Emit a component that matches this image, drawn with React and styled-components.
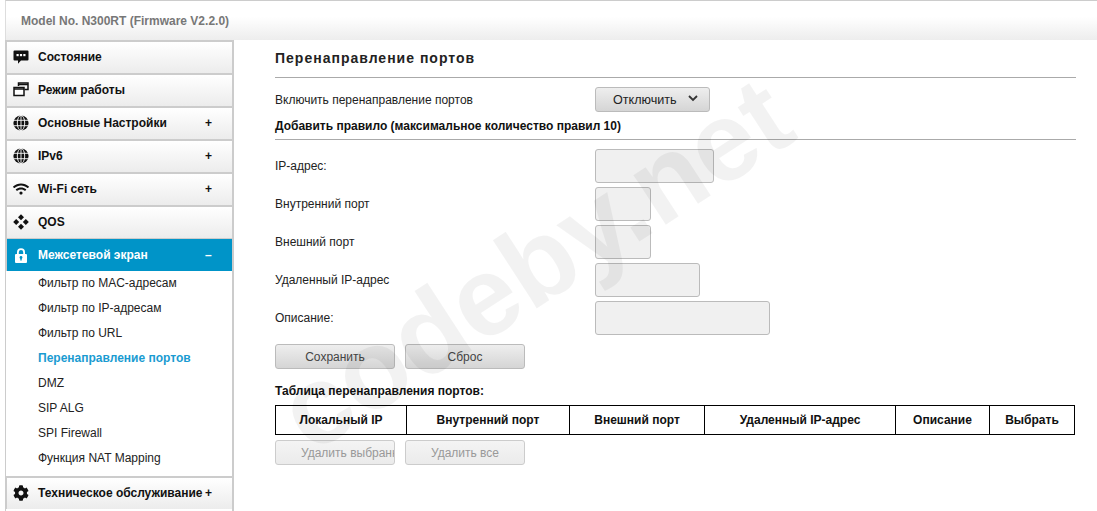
import React from 'react'
import styled, { createGlobalStyle } from 'styled-components'
import { FaCog, FaWifi } from 'react-icons/fa'

const GlobalStyle = createGlobalStyle`
  html, body { margin: 0; padding: 0; background: #fff; }
  body { font-family: "Liberation Sans", Arial, sans-serif; font-size: 12px; color: #1a1a1a; overflow: hidden; }
`

const Page = styled.div`
  position: relative;
  width: 1097px;
  height: 511px;
  overflow: hidden;
`

const Header = styled.header`
  box-sizing: border-box;
  height: 40px;
  margin-left: 5px;
  padding: 12px 0 0 15px;
  border-top: 1px solid #ccc;
  border-left: 1px solid #ddd;
  background: linear-gradient(#fff 40%, #ededed);
  color: #777;
  font-size: 12px;
  font-weight: bold;
  line-height: 16px;
`

const Layout = styled.div`
  display: flex;
`

const Sidebar = styled.aside`
  box-sizing: border-box;
  width: 229px;
  height: 471px;
  margin-left: 5px;
  border-left: 1px solid #ccc;
  border-right: 2px solid #ccc;
`

const MenuRow = styled.div`
  box-sizing: border-box;
  display: flex;
  align-items: center;
  height: 33px;
  padding: 0 0 ${p => (p.$active ? 0 : 2)}px 6px;
  border-top: ${p => (p.$active ? '1px' : '2px')} solid #ccc;
  border-left: 1px solid #ccc;
  background: ${p => (p.$active ? '#0094c8' : 'linear-gradient(#fff, #ececec)')};
  background-clip: padding-box;
  color: ${p => (p.$active ? '#fff' : '#111')};
  font-weight: bold;
`

const IconBox = styled.span`
  display: flex;
  justify-content: center;
  align-items: center;
  width: 16px;
  height: 17px;
  margin-right: 9px;
  font-size: 16px;
`

const MenuLabel = styled.span`
  flex: 1;
  white-space: nowrap;
`

const Sign = styled.span`
  flex: none;
  width: 27px;
  font-size: 12px;
`

const SubMenu = styled.div`
  padding: 0 0 5px 32px;
`

const SubItem = styled.div`
  height: 25px;
  line-height: 25px;
  color: ${p => (p.$current ? '#1a9bd1' : '#222')};
  font-weight: ${p => (p.$current ? 'bold' : 'normal')};
`

const Main = styled.main`
  width: 801px;
  margin-left: 41px;
`

const Title = styled.h1`
  box-sizing: border-box;
  height: 38px;
  margin: 0;
  padding-top: 10px;
  border-bottom: 1px solid #aaa;
  color: #222;
  font-size: 14px;
  font-weight: bold;
  line-height: 16px;
  letter-spacing: 1px;
`

const FieldRow = styled.div`
  box-sizing: border-box;
  display: flex;
  align-items: center;
  height: ${p => p.$h || 38}px;
  padding-top: ${p => p.$pt || 0}px;
`

const Label = styled.label`
  width: 320px;
  color: #222;
  line-height: 14px;
`

const SelectButton = styled.button`
  box-sizing: border-box;
  display: flex;
  align-items: center;
  width: 115px;
  height: 25px;
  padding: 0 0 0 17px;
  border: 1px solid #bbb;
  border-radius: 3px;
  background: linear-gradient(#eee, #d5d5d5);
  color: #222;
  font: 12.6px "Liberation Sans", Arial, sans-serif;
`

const Chevron = styled.svg`
  width: 10px;
  height: 7px;
  margin-left: 11px;
  margin-top: -3px;
`

const SubHeading = styled.div`
  box-sizing: border-box;
  height: ${p => p.$h}px;
  padding-top: ${p => p.$pt || 0}px;
  border-bottom: ${p => (p.$line ? '1px solid #aaa' : '0')};
  color: #111;
  font-weight: bold;
  line-height: 14px;
`

const Fields = styled.div`
  padding-top: 7px;
`

const Input = styled.input`
  box-sizing: border-box;
  display: block;
  width: ${p => p.$w}px;
  height: 34px;
  padding: 0;
  border: 1px solid #bbb;
  border-radius: 3px;
  background: #f0f0f0;
`

const ButtonRow = styled.div`
  display: flex;
  gap: 10px;
  margin-top: ${p => p.$top}px;
`

const Btn = styled.button`
  box-sizing: border-box;
  width: 120px;
  height: 25px;
  overflow: hidden;
  padding: 0 0 0 ${p => (p.$clip ? 25 : 0)}px;
  border: 1px solid ${p => (p.$off ? '#ccc' : '#bbb')};
  border-radius: 3px;
  background: ${p => (p.$off ? 'linear-gradient(#f4f4f4, #ebebeb)' : 'linear-gradient(#eee, #d5d5d5)')};
  color: ${p => (p.$off ? '#999' : '#444')};
  font: 12px "Liberation Sans", Arial, sans-serif;
  text-align: ${p => (p.$clip ? 'left' : 'center')};
  white-space: nowrap;
`

const Table = styled.table`
  box-sizing: border-box;
  width: 799px;
  height: 30px;
  margin: 0;
  border-collapse: collapse;
  table-layout: fixed;
`

const Th = styled.th`
  box-sizing: border-box;
  padding: 0;
  border: 1px solid #000;
  color: #111;
  font-size: 12px;
  font-weight: bold;
`

const Watermark = styled.div`
  position: absolute;
  left: 321px;
  top: 358px;
  color: rgba(0, 0, 0, 0.05);
  font-size: 112px;
  font-weight: bold;
  line-height: 112px;
  white-space: nowrap;
  transform: rotate(-33deg);
  transform-origin: 0 100%;
  pointer-events: none;
`

const ChatIcon = () => (
  <svg width="16" height="16" viewBox="0 0 16 16">
    <path d="M1.500 1.500h13a1 1 0 0 1 1 1v8a1 1 0 0 1-1 1H8l-3 3.200v-3.200H1.500a1 1 0 0 1-1-1v-8a1 1 0 0 1 1-1z" fill="#111" />
    <rect x="3.500" y="5" width="2.200" height="2.200" fill="#fff" />
    <rect x="6.900" y="5" width="2.200" height="2.200" fill="#fff" />
    <rect x="10.300" y="5" width="2.200" height="2.200" fill="#fff" />
  </svg>
)

const WindowsIcon = () => (
  <svg width="16" height="15" viewBox="0 0 16 15" fill="none" stroke="#111" strokeWidth="1.500">
    <path d="M5.500 4V1h9.500v6.500H11.500" />
    <rect x="1" y="5.500" width="10" height="8" fill="#fff" />
    <path d="M1 7h10M5.500 2.500h9.500" />
  </svg>
)

const GlobeIcon = () => (
  <svg width="16" height="16" viewBox="0 0 16 16">
    <circle cx="8" cy="8" r="7.600" fill="#111" />
    <g fill="none" stroke="#fff" strokeWidth="0.900">
      <path d="M0.500 5.300h15M0.500 10.700h15M8 0.400v15.200" />
      <ellipse cx="8" cy="8" rx="3.700" ry="7.600" />
    </g>
  </svg>
)

const QosIcon = () => (
  <svg width="16" height="16" viewBox="0 0 16 16" fill="#111">
    <path d="M8 0.200l3 3-3 3-3-3z" />
    <path d="M8 9.800l3 3-3 3-3-3z" />
    <path d="M3.200 5l3 3-3 3-3-3z" />
    <path d="M12.800 5l3 3-3 3-3-3z" />
  </svg>
)

const LockIcon = () => (
  <svg width="12" height="15" viewBox="0 0 12 15">
    <path d="M1 6h1V4.200a4 4 0 0 1 8 0V6h1a1 1 0 0 1 1 1v7a1 1 0 0 1-1 1H1a1 1 0 0 1-1-1V7a1 1 0 0 1 1-1zm2.800 0h4.400V4.200a2.200 2.200 0 0 0-4.400 0z" fill="#fff" fillRule="evenodd" />
    <circle cx="6" cy="9.500" r="1.400" fill="#0094c8" />
    <rect x="5.300" y="9.500" width="1.400" height="3" fill="#0094c8" />
  </svg>
)

const menuTop = [
  { label: 'Состояние', icon: <ChatIcon /> },
  { label: 'Режим работы', icon: <WindowsIcon /> },
  { label: 'Основные Настройки', icon: <GlobeIcon />, sign: '+' },
  { label: 'IPv6', icon: <GlobeIcon />, sign: '+' },
  { label: 'Wi-Fi сеть', icon: <FaWifi />, sign: '+' },
  { label: 'QOS', icon: <QosIcon /> },
]

const subItems = [
  'Фильтр по MAC-адресам',
  'Фильтр по IP-адресам',
  'Фильтр по URL',
  'Перенаправление портов',
  'DMZ',
  'SIP ALG',
  'SPI Firewall',
  'Функция NAT Mapping',
]

const fields = [
  { label: 'IP-адрес:', w: 119 },
  { label: 'Внутренний порт', w: 56 },
  { label: 'Внешний порт', w: 56 },
  { label: 'Удаленный IP-адрес', w: 105 },
  { label: 'Описание:', w: 175 },
]

const columns = [
  { title: 'Локальный IP', w: 131 },
  { title: 'Внутренний порт', w: 163 },
  { title: 'Внешний порт', w: 135 },
  { title: 'Удаленный IP-адрес', w: 191 },
  { title: 'Описание', w: 94 },
  { title: 'Выбрать', w: 85 },
]

export default function App() {
  return (
    <Page>
      <GlobalStyle />
      <Header>Model No. N300RT (Firmware V2.2.0)</Header>
      <Layout>
        <Sidebar>
          {menuTop.map(item => (
            <MenuRow key={item.label}>
              <IconBox>{item.icon}</IconBox>
              <MenuLabel>{item.label}</MenuLabel>
              {item.sign && <Sign>{item.sign}</Sign>}
            </MenuRow>
          ))}
          <MenuRow $active>
            <IconBox><LockIcon /></IconBox>
            <MenuLabel>Межсетевой экран</MenuLabel>
            <Sign>–</Sign>
          </MenuRow>
          <SubMenu>
            {subItems.map(name => (
              <SubItem key={name} $current={name === 'Перенаправление портов'}>{name}</SubItem>
            ))}
          </SubMenu>
          <MenuRow>
            <IconBox><FaCog /></IconBox>
            <MenuLabel>Техническое обслуживание</MenuLabel>
            <Sign>+</Sign>
          </MenuRow>
        </Sidebar>
        <Main>
          <Title>Перенаправление портов</Title>
          <FieldRow $h={41} $pt={2}>
            <Label>Включить перенаправление портов</Label>
            <SelectButton>
              Отключить
              <Chevron viewBox="0 0 10 7" fill="none" stroke="#333" strokeWidth="1.800">
                <path d="M1 1l4 4 4-4" />
              </Chevron>
            </SelectButton>
          </FieldRow>
          <SubHeading $h={21} $line>Добавить правило (максимальное количество правил 10)</SubHeading>
          <Fields>
            {fields.map(f => (
              <FieldRow key={f.label}>
                <Label>{f.label}</Label>
                <Input $w={f.w} />
              </FieldRow>
            ))}
          </Fields>
          <ButtonRow $top={7}>
            <Btn>Сохранить</Btn>
            <Btn>Сброс</Btn>
          </ButtonRow>
          <SubHeading $h={36} $pt={15}>Таблица перенаправления портов:</SubHeading>
          <Table>
            <colgroup>
              {columns.map(c => <col key={c.title} width={c.w} />)}
            </colgroup>
            <thead>
              <tr>
                {columns.map(c => <Th key={c.title}>{c.title}</Th>)}
              </tr>
            </thead>
          </Table>
          <ButtonRow $top={5}>
            <Btn $off $clip disabled>Удалить выбранные</Btn>
            <Btn $off disabled>Удалить все</Btn>
          </ButtonRow>
        </Main>
      </Layout>
      <Watermark>codeby.net</Watermark>
    </Page>
  )
}
